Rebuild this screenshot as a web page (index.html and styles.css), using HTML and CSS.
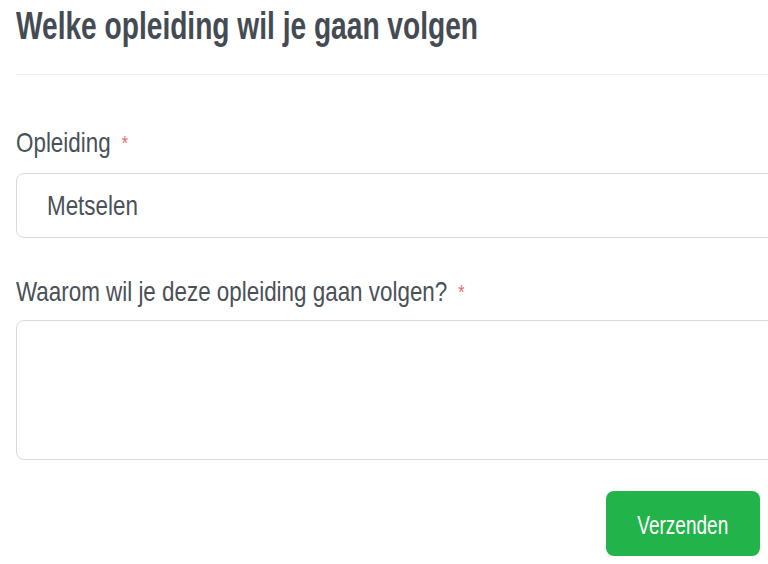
FILE: index.html
```html
<!DOCTYPE html>
<html lang="nl">
<head>
<meta charset="utf-8">
<title>Welke opleiding wil je gaan volgen</title>
<link rel="stylesheet" href="styles.css">
</head>
<body>
<main class="page">
  <h1 class="title">Welke opleiding wil je gaan volgen</h1>
  <hr class="divider">
  <form class="form">
    <div class="field">
      <label class="label">Opleiding <span class="req">*</span></label>
      <div class="select"><span class="select-text">Metselen</span></div>
    </div>
    <div class="field">
      <label class="label">Waarom wil je deze opleiding gaan volgen? <span class="req">*</span></label>
      <div class="textarea"></div>
    </div>
    <div class="actions">
      <button type="button" class="btn"><span class="btn-text">Verzenden</span></button>
    </div>
  </form>
</main>
</body>
</html>
```

FILE: styles.css
```css
html, body {
  margin: 0;
  padding: 0;
  background: #ffffff;
  overflow: hidden;
}
body {
  font-family: "Liberation Sans", Arial, sans-serif;
  color: #4a5058;
}
.page {
  padding-left: 16px;
  width: 768px;
  box-sizing: border-box;
}
/* narrow face emulation: the reference uses a condensed sans */
.title {
  margin: 0;
  font-size: 38px;
  line-height: 52px;
  font-weight: 700;
  color: #454b53;
  white-space: nowrap;
  transform: scaleX(0.74);
  transform-origin: left center;
}
.divider {
  border: 0;
  border-top: 1px solid #eeeeee;
  margin: 22px -40px 0 0;
  height: 0;
}
.form {
  display: flex;
  flex-direction: column;
}
.field {
  display: flex;
  flex-direction: column;
}
.label {
  display: block;
  font-size: 28px;
  line-height: 34px;
  color: #4a5058;
  white-space: nowrap;
  transform: scaleX(0.8);
  transform-origin: left center;
}
.req {
  color: #f0646a;
  font-size: 20px;
  margin-left: 6px;
  vertical-align: 2px;
}
.field:first-child .label {
  margin-top: 51px;
}
.field + .field .label {
  margin-top: 37px;
}
.select {
  margin-top: 13px;
  margin-right: -40px;
  height: 65px;
  box-sizing: border-box;
  border: 1.5px solid #dadada;
  border-radius: 8px;
  padding-left: 30px;
  display: flex;
  align-items: center;
}
.select-text {
  display: inline-block;
  font-size: 28px;
  color: #4a5058;
  transform: scaleX(0.8);
  transform-origin: left center;
}
.textarea {
  margin-top: 11px;
  margin-right: -40px;
  height: 140px;
  box-sizing: border-box;
  border: 1.5px solid #dadada;
  border-radius: 8px;
}
.actions {
  display: flex;
  justify-content: flex-end;
  margin-top: 31px;
  padding-right: 8px;
}
.btn {
  width: 154px;
  height: 65px;
  border: 0;
  border-radius: 8px;
  background: #23b34b;
  color: #ffffff;
  font-family: inherit;
  font-size: 25px;
  padding: 0;
  display: flex;
  align-items: center;
  justify-content: center;
}
.btn-text {
  display: inline-block;
  margin-top: 4px;
  transform: scaleX(0.76);
  transform-origin: center center;
}
```
